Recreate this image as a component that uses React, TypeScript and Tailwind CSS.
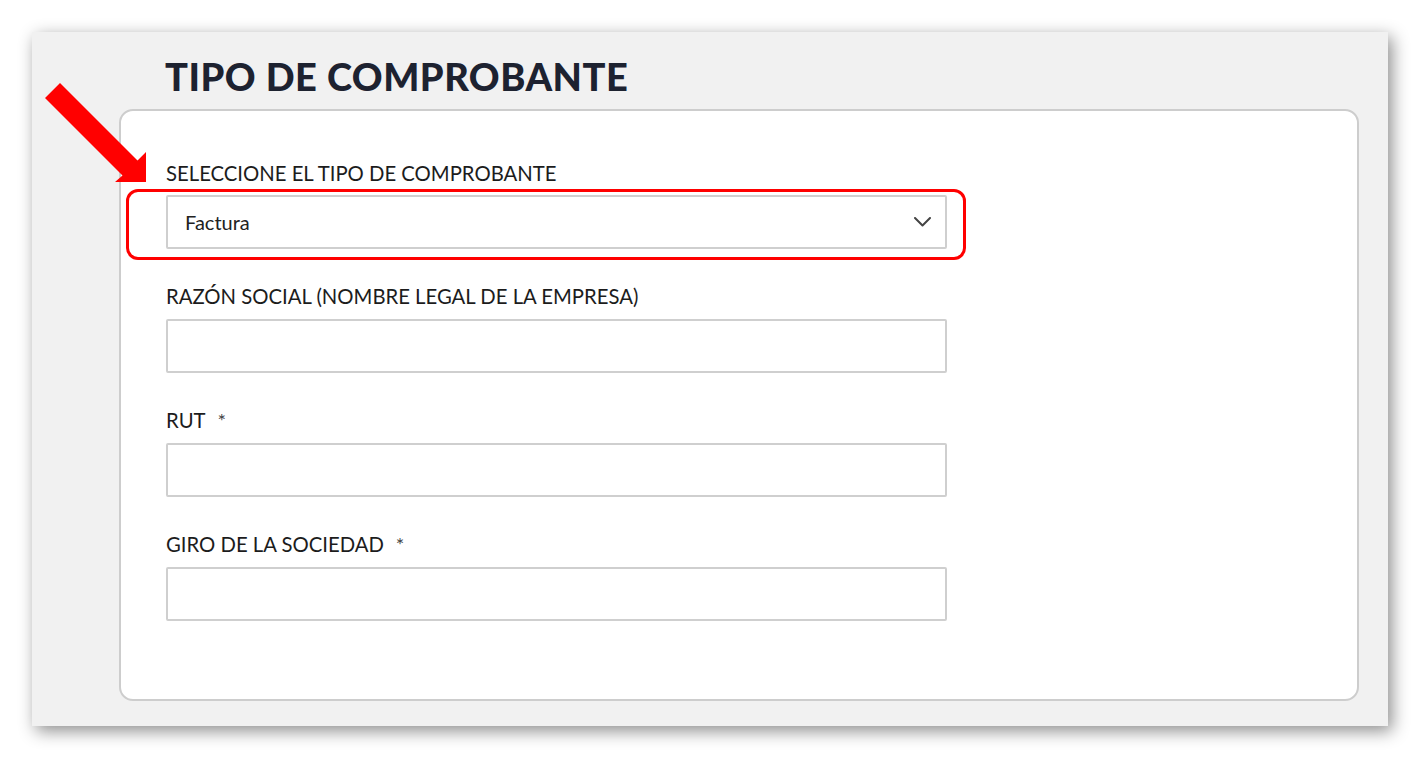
import React from "react";

const Chevron = () => (
  <svg width="17" height="10" viewBox="0 0 17 10" fill="none">
    <polyline points="1,1 8.5,8.5 16,1" stroke="#444" strokeWidth="2" strokeLinecap="round" strokeLinejoin="round" />
  </svg>
);

const Field = ({ label, required }: { label: string; required?: boolean }) => (
  <div className="flex flex-col">
    <label className="h-[24px] leading-[24px] text-[20.3px] text-[#1c1c1c]">
      {label}
      {required && <span className="ml-[12px] text-[20px] text-[#444]">*</span>}
    </label>
    <input
      type="text"
      className="mt-[11px] h-[54px] w-[781px] bg-white border-2 border-[#cfcfcf] rounded-[2px] outline-none"
    />
  </div>
);

export default function App() {
  return (
    <div
      className="relative w-full h-[758px] bg-white pt-[32px] pl-[32px]"
      style={{ fontFamily: "Lato, 'Open Sans', sans-serif" }}
    >
      <div className="w-[1356px] h-[694px] bg-[#f1f1f1] shadow-[4px_5px_16px_rgba(0,0,0,0.45)] pt-[25px]">
        <h1 className="pl-[133px] h-[39px] leading-[39px] text-[38px] font-black tracking-[0.5px] text-[#1d2230]">
          TIPO DE COMPROBANTE
        </h1>
        <div className="ml-[87px] mt-[13px] w-[1240px] h-[592px] bg-white border-2 border-[#cdcdcd] rounded-[14px] pt-[50px] pl-[45px]">
          <div className="flex flex-col gap-[35px]">
            <div className="flex flex-col">
              <label className="h-[24px] leading-[24px] text-[20.3px] text-[#1c1c1c]">
                SELECCIONE EL TIPO DE COMPROBANTE
              </label>
              <div className="relative mt-[10px] w-[781px]">
                <div className="h-[54px] bg-white border-2 border-[#cfcfcf] rounded-[2px] flex items-center justify-between pl-[17px] pr-[14px]">
                  <span className="text-[20px] text-[#222]">Factura</span>
                  <Chevron />
                </div>
                <div className="absolute -left-[40px] -right-[19px] -top-[6px] -bottom-[11px] border-[3px] border-[#ff0000] rounded-[12px] pointer-events-none" />
              </div>
            </div>
            <Field label="RAZÓN SOCIAL (NOMBRE LEGAL DE LA EMPRESA)" />
            <Field label="RUT" required />
            <Field label="GIRO DE LA SOCIEDAD" required />
          </div>
        </div>
      </div>
      <svg className="absolute top-0 left-0 pointer-events-none" width="160" height="200" viewBox="0 0 160 200">
        <polygon
          points="60,83 137.5,160.5 146,152 146,182 115,182 122.5,175.5 45,98"
          fill="#ff0000"
        />
      </svg>
    </div>
  );
}
